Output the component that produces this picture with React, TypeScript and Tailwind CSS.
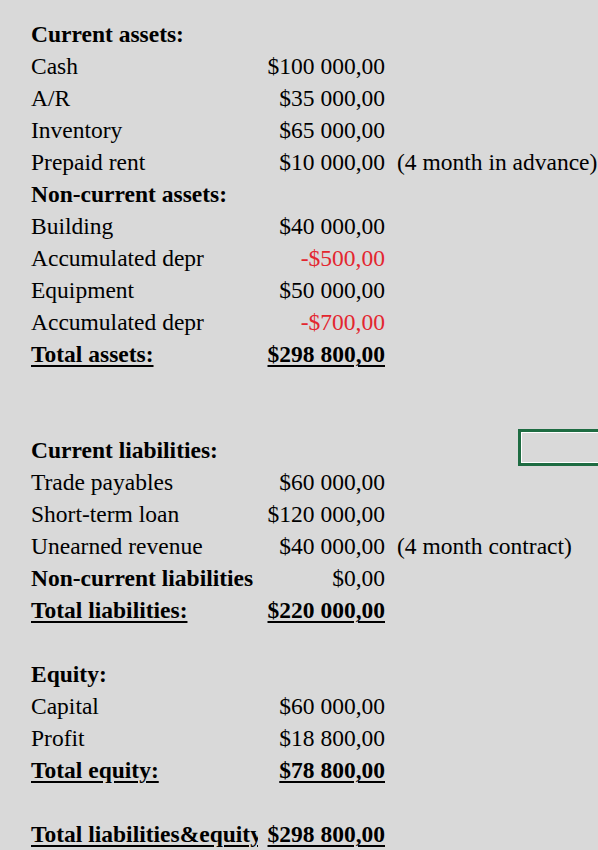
type Row = {
  label?: string;
  value?: string;
  note?: string;
  bold?: boolean;
  total?: boolean;
  red?: boolean;
};

const rows: Row[] = [
  { label: "Current assets:", bold: true },
  { label: "Cash", value: "$100 000,00" },
  { label: "A/R", value: "$35 000,00" },
  { label: "Inventory", value: "$65 000,00" },
  { label: "Prepaid rent", value: "$10 000,00", note: "(4 month in advance)" },
  { label: "Non-current assets:", bold: true },
  { label: "Building", value: "$40 000,00" },
  { label: "Accumulated depr", value: "-$500,00", red: true },
  { label: "Equipment", value: "$50 000,00" },
  { label: "Accumulated depr", value: "-$700,00", red: true },
  { label: "Total assets:", value: "$298 800,00", total: true },
  {},
  {},
  { label: "Current liabilities:", bold: true },
  { label: "Trade payables", value: "$60 000,00" },
  { label: "Short-term loan", value: "$120 000,00" },
  { label: "Unearned revenue", value: "$40 000,00", note: "(4 month contract)" },
  { label: "Non-current liabilities", value: "$0,00", bold: true },
  { label: "Total liabilities:", value: "$220 000,00", total: true },
  {},
  { label: "Equity:", bold: true },
  { label: "Capital", value: "$60 000,00" },
  { label: "Profit", value: "$18 800,00" },
  { label: "Total equity:", value: "$78 800,00", total: true },
  {},
  { label: "Total liabilities&equity", value: "$298 800,00", total: true },
];

export default function App() {
  return (
    <div
      className="relative h-[850px] w-[598px] overflow-hidden bg-[#d9d9d9] pt-[18px] text-[23.5px] leading-[32px] text-black"
      style={{ fontFamily: '"Liberation Serif", "Times New Roman", serif' }}
    >
      {rows.map((r, i) => (
        <div key={i} className="grid h-[32px] grid-cols-[258px_130px_1fr] whitespace-nowrap">
          <div
            className={`overflow-hidden pl-[31px] ${r.bold ? "font-bold" : ""} ${
              r.total ? "font-bold underline decoration-2 underline-offset-[3px]" : ""
            }`}
          >
            {r.label}
          </div>
          <div
            className={`pr-[3px] text-right ${r.red ? "text-[#e3262f]" : ""} ${
              r.total ? "font-bold underline decoration-2 underline-offset-[3px]" : ""
            }`}
          >
            {r.value}
          </div>
          <div className="pl-[9px]">{r.note}</div>
        </div>
      ))}

      {/* selected cell */}
      <div className="absolute left-[518px] top-[429px] h-[37px] w-[100px] border-[3px] border-[#1e6c42]">
        <div className="h-full w-full border border-white" />
      </div>
    </div>
  );
}
